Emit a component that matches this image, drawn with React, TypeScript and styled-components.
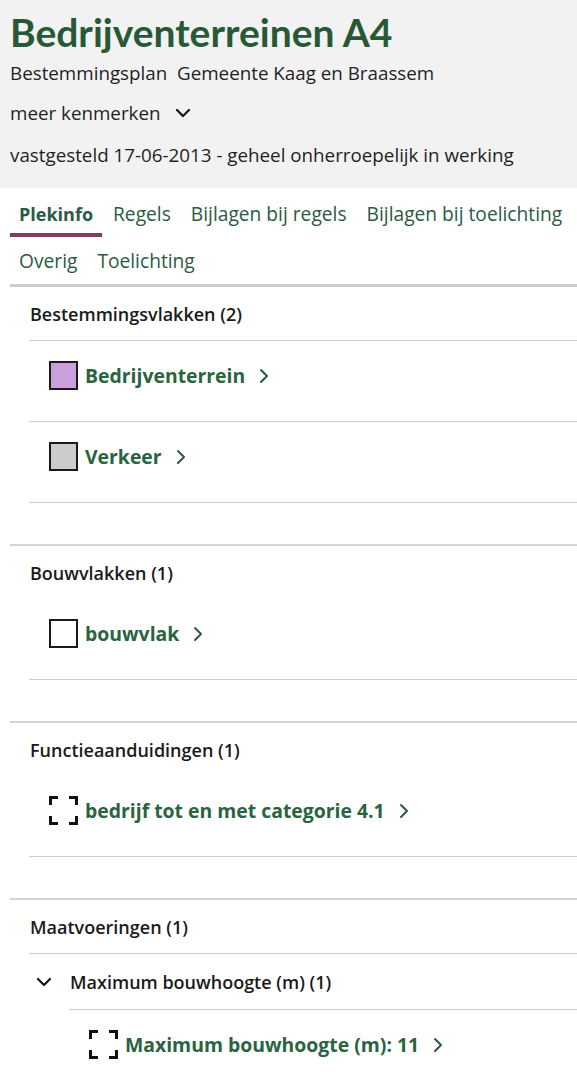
import React from "react";
import styled, { createGlobalStyle } from "styled-components";

const Global = createGlobalStyle`
  html, body { margin: 0; padding: 0; background: #ffffff; }
  body { font-family: "Open Sans", "Noto Sans", Arial, sans-serif; color: #1f1f1f; }
  * { box-sizing: border-box; }
`;

const Page = styled.div`
  width: 577px;
  overflow: hidden;
`;

const Header = styled.header`
  background: #f2f2f2;
  padding: 8px 10px 21px 10px;
`;

const Title = styled.h1`
  margin: 0;
  font-family: Lato, "Open Sans", Arial, sans-serif;
  font-size: 39px;
  line-height: 48px;
  font-weight: 700;
  color: #275937;
`;

const MetaLine = styled.div<{ $gap: number }>`
  margin-top: ${(p) => p.$gap}px;
  font-size: 18.8px;
  line-height: 24px;
  color: #1f1f1f;
  display: flex;
  align-items: center;
  gap: 14px;
  white-space: pre;
`;

const Tabs = styled.nav`
  display: flex;
  flex-wrap: wrap;
  column-gap: 2px;
  margin: 0 0 0 10px;
  padding-top: 2px;
  border-bottom: 3px solid #cccccc;
`;

const Tab = styled.div<{ $active?: boolean }>`
  padding: 12px 9px 7px 9px;
  line-height: 24px;
  font-size: ${(p) => (p.$active ? 18 : 19.2)}px;
  font-weight: ${(p) => (p.$active ? 700 : 400)};
  color: #2a5a43;
  white-space: nowrap;
  border-bottom: 4px solid ${(p) => (p.$active ? "#843b62" : "transparent")};
`;

const Section = styled.section<{ $first?: boolean }>`
  margin-left: 10px;
  padding-left: 19px;
  border-top: ${(p) => (p.$first ? "none" : "2px solid #d4d4d4")};
`;

const Heading = styled.h2`
  margin: 0;
  padding: 15px 0 0 1px;
  font-size: 18px;
  line-height: 24px;
  font-weight: 600;
  color: #1a1a1a;
`;

const List = styled.ul<{ $rule?: boolean; $indent?: number; $bottom?: number }>`
  list-style: none;
  margin: ${(p) => (p.$indent ? 0 : 14)}px 0 ${(p) => p.$bottom ?? 41}px ${(p) => p.$indent ?? 0}px;
  padding: 0;
  border-top: ${(p) => (p.$rule ? "1px solid #cfcfcf" : "none")};
`;

const Item = styled.li<{ $last?: boolean }>`
  display: flex;
  align-items: center;
  padding: 20px 0 31px 20px;
  border-bottom: ${(p) => (p.$last ? "none" : "1px solid #cfcfcf")};
`;

const Swatch = styled.span<{ $fill: string }>`
  width: 29px;
  height: 29px;
  flex: none;
  background: ${(p) => p.$fill};
  border: 2px solid #1a1a1a;
`;

const CornerBox = styled.span`
  width: 29px;
  height: 29px;
  flex: none;
  display: inline-flex;
`;

const Link = styled.a`
  margin-left: 7px;
  display: inline-flex;
  align-items: center;
  gap: 14px;
  font-size: 19.4px;
  line-height: 29px;
  font-weight: 700;
  color: #2a6340;
  text-decoration: none;
  white-space: nowrap;
`;

const GroupHeader = styled.div`
  display: flex;
  align-items: center;
  gap: 18px;
  padding: 16px 0 15px 7px;
  font-size: 18px;
  line-height: 24px;
  font-weight: 600;
  color: #1a1a1a;
`;

const ChevronRight = () => (
  <svg width="10" height="16" viewBox="0 0 10 16" fill="none">
    <path d="M2 2l6 6-6 6" stroke="#2a5a43" strokeWidth="2" strokeLinecap="round" strokeLinejoin="round" />
  </svg>
);

const ChevronDown = ({ w = 16 }: { w?: number }) => (
  <svg width={w} height="10" viewBox="0 0 16 10" fill="none">
    <path d="M2 2l6 6 6-6" stroke="#111" strokeWidth="2.2" strokeLinecap="round" strokeLinejoin="round" />
  </svg>
);

const Corners = () => (
  <CornerBox>
    <svg width="29" height="29" viewBox="0 0 29 29" fill="none">
      <path
        d="M1.5 9V1.5H9M20 1.5h7.5V9M27.5 20v7.5H20M9 27.5H1.5V20"
        stroke="#111"
        strokeWidth="3"
      />
    </svg>
  </CornerBox>
);

type Entry = { label: string; icon: React.ReactNode };

const Entries = ({ items }: { items: Entry[] }) => (
  <>
    {items.map((it, i) => (
      <Item key={i}>
        {it.icon}
        <Link href="#">
          {it.label}
          <ChevronRight />
        </Link>
      </Item>
    ))}
  </>
);

export default function App() {
  return (
    <Page>
      <Global />
      <Header>
        <Title>Bedrijventerreinen A4</Title>
        <MetaLine $gap={5}>{"Bestemmingsplan  Gemeente Kaag en Braassem"}</MetaLine>
        <MetaLine $gap={16}>
          meer kenmerken
          <ChevronDown />
        </MetaLine>
        <MetaLine $gap={18}>vastgesteld 17-06-2013 - geheel onherroepelijk in werking</MetaLine>
      </Header>

      <Tabs>
        <Tab $active>Plekinfo</Tab>
        <Tab>Regels</Tab>
        <Tab>Bijlagen bij regels</Tab>
        <Tab>Bijlagen bij toelichting</Tab>
        <Tab>Overig</Tab>
        <Tab>Toelichting</Tab>
      </Tabs>

      <Section $first>
        <Heading>Bestemmingsvlakken (2)</Heading>
        <List $rule>
          <Entries
            items={[
              { label: "Bedrijventerrein", icon: <Swatch $fill="#c9a0dc" /> },
              { label: "Verkeer", icon: <Swatch $fill="#cccccc" /> },
            ]}
          />
        </List>
      </Section>

      <Section>
        <Heading>Bouwvlakken (1)</Heading>
        <List>
          <Entries items={[{ label: "bouwvlak", icon: <Swatch $fill="#ffffff" /> }]} />
        </List>
      </Section>

      <Section>
        <Heading>Functieaanduidingen (1)</Heading>
        <List>
          <Entries items={[{ label: "bedrijf tot en met categorie 4.1", icon: <Corners /> }]} />
        </List>
      </Section>

      <Section>
        <Heading>Maatvoeringen (1)</Heading>
        <List $rule $bottom={0}>
          <li>
            <GroupHeader>
              <ChevronDown w={16} />
              Maximum bouwhoogte (m) (1)
            </GroupHeader>
            <List $rule $indent={40} $bottom={0}>
              <Item $last>
                <Corners />
                <Link href="#">
                  Maximum bouwhoogte (m): 11
                  <ChevronRight />
                </Link>
              </Item>
            </List>
          </li>
        </List>
      </Section>
    </Page>
  );
}
